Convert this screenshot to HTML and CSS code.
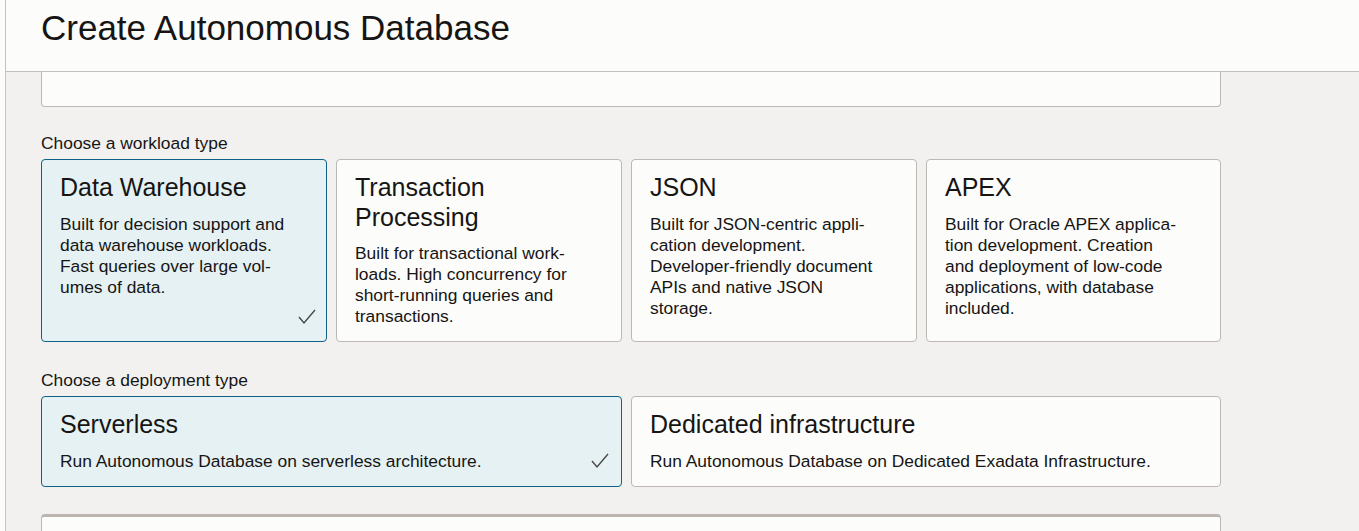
FILE: index.html
```html
<!DOCTYPE html>
<html lang="en">
<head>
<meta charset="utf-8">
<title>Create Autonomous Database</title>
<link rel="stylesheet" href="styles.css">
</head>
<body>
<div class="shell">
  <div class="rail"></div>
  <main class="main">
    <header class="header">
      <h1 class="page-title">Create Autonomous Database</h1>
    </header>
    <div class="content">
      <div class="prev-box"></div>

      <div class="field">
        <div class="field-label">Choose a workload type</div>
        <div class="card-grid">
          <div class="card selected">
            <div class="card-title">Data Warehouse</div>
            <div class="card-desc">Built for decision support and<br>data warehouse workloads.<br>Fast queries over large vol-<br>umes of data.</div>
            <svg class="check" width="18" height="16" viewBox="0 0 18 16"><polyline points="1,8 6,14 17,1" fill="none" stroke="#4a4845" stroke-width="1.4"/></svg>
          </div>
          <div class="card">
            <div class="card-title">Transaction<br>Processing</div>
            <div class="card-desc">Built for transactional work-<br>loads. High concurrency for<br>short-running queries and<br>transactions.</div>
          </div>
          <div class="card">
            <div class="card-title">JSON</div>
            <div class="card-desc">Built for JSON-centric appli-<br>cation development.<br>Developer-friendly document<br>APIs and native JSON<br>storage.</div>
          </div>
          <div class="card">
            <div class="card-title">APEX</div>
            <div class="card-desc">Built for Oracle APEX applica-<br>tion development. Creation<br>and deployment of low-code<br>applications, with database<br>included.</div>
          </div>
        </div>
      </div>

      <div class="field">
        <div class="field-label">Choose a deployment type</div>
        <div class="card-grid">
          <div class="card wide selected">
            <div class="card-title">Serverless</div>
            <div class="card-desc">Run Autonomous Database on serverless architecture.</div>
            <svg class="check" width="18" height="16" viewBox="0 0 18 16"><polyline points="1,8 6,14 17,1" fill="none" stroke="#4a4845" stroke-width="1.4"/></svg>
          </div>
          <div class="card wide">
            <div class="card-title">Dedicated infrastructure</div>
            <div class="card-desc">Run Autonomous Database on Dedicated Exadata Infrastructure.</div>
          </div>
        </div>
      </div>

      <div class="next-box"></div>
    </div>
  </main>
</div>
</body>
</html>
```

FILE: styles.css
```css
* { box-sizing: border-box; }

html, body {
  margin: 0;
  padding: 0;
  height: 100%;
  overflow: hidden;
}

body {
  font-family: "Liberation Sans", Arial, sans-serif;
  color: #161513;
  background: #f2f1f0;
}

.shell {
  display: flex;
  height: 531px;
}

.rail {
  width: 6px;
  flex: none;
  background: #fcfcfb;
  border-right: 1px solid #c8c5c1;
}

.main {
  flex: 1;
  display: flex;
  flex-direction: column;
  min-width: 0;
}

.header {
  height: 72px;
  flex: none;
  background: #fcfcfb;
  border-bottom: 1px solid #c3bfbb;
  padding: 8px 0 0 35px;
}

.page-title {
  margin: 0;
  font-weight: normal;
  font-size: 35px;
  line-height: 39px;
}

.content {
  padding: 0 0 0 35px;
  width: 1215px;
}

.prev-box {
  height: 35px;
  background: #fcfcfb;
  border: 1px solid #bdb8b3;
  border-top: none;
  border-radius: 0 0 4px 4px;
}

.field {
  margin-top: 26px;
}

.field + .field {
  margin-top: 28px;
}

.field-label {
  font-size: 17.4px;
  line-height: 21px;
  margin-bottom: 5px;
}

.card-grid {
  display: grid;
  grid-template-columns: 286px 286px 286px 1fr;
  column-gap: 9px;
}

.card {
  position: relative;
  background: #fcfcfb;
  border: 1px solid #bdb8b3;
  border-radius: 4px;
  padding: 13px 18px 14px 18px;
}

.card.wide {
  grid-column: span 2;
}

.card.selected {
  background: #e5f1f3;
  border-color: #0d6286;
}

.card-title {
  font-size: 25px;
  line-height: 29.6px;
}

.card-desc {
  margin-top: 11px;
  font-size: 17.4px;
  line-height: 21px;
}

.check {
  position: absolute;
  right: 10px;
  bottom: 16px;
}

.card.wide .check {
  right: 12px;
  bottom: 17px;
}

.next-box {
  margin-top: 27px;
  height: 40px;
  background: #fcfcfb;
  border: 1px solid #bdb8b3;
  border-top: 3px solid #bcb5af;
  border-radius: 4px 4px 0 0;
}
```
